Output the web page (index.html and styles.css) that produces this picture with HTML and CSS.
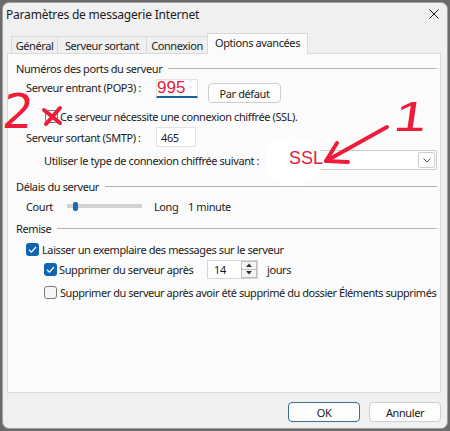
FILE: index.html
```html
<!DOCTYPE html>
<html lang="fr">
<head>
<meta charset="utf-8">
<title>Paramètres de messagerie Internet</title>
<link rel="stylesheet" href="styles.css">
</head>
<body>
<div class="window">
  <div class="titlebar">
    <span class="title">Paramètres de messagerie Internet</span>
    <svg class="close" width="10" height="10" viewBox="0 0 10 10"><path d="M0.5 0.5 L9.5 9.5 M9.5 0.5 L0.5 9.5" stroke="#1b1b1b" stroke-width="1" fill="none"/></svg>
  </div>
  <div class="tabs">
    <div class="tab t1">Général</div>
    <div class="tab t2">Serveur sortant</div>
    <div class="tab t3">Connexion</div>
    <div class="tab t4 active">Options avancées</div>
  </div>
  <div class="panel">
    <div class="head h-ports"><span>Numéros des ports du serveur</span><i class="rule"></i></div>
    <div class="row pop3">
      <span class="lbl">Serveur entrant (POP3) :</span>
      <div class="field f995">995</div>
      <div class="btn pd">Par défaut</div>
    </div>
    <div class="row ssl"><span class="cb"></span><span class="cbtext">Ce serveur nécessite une connexion chiffrée (SSL).</span></div>
    <div class="row smtp">
      <span class="lbl">Serveur sortant (SMTP) :</span>
      <div class="field f465">465</div>
    </div>
    <div class="row type">
      <span class="lbl2">Utiliser le type de connexion chiffrée suivant :</span>
      <div class="select">
        <span class="dd"><svg width="8" height="5" viewBox="0 0 8 5"><path d="M0.5 0.5 L4 4 L7.5 0.5" stroke="#555" stroke-width="1" fill="none"/></svg></span>
      </div>
    </div>
    <div class="head h-delay"><span>Délais du serveur</span><i class="rule"></i></div>
    <div class="row slider-row">
      <span class="court">Court</span>
      <div class="slider"><span class="thumb"></span></div>
      <span class="long">Long</span>
      <span>1 minute</span>
    </div>
    <div class="head h-remise"><span>Remise</span><i class="rule"></i></div>
    <div class="row cb1">
      <span class="cb checked"><svg width="13" height="13" viewBox="0 0 13 13"><path d="M3 6.8 L5.4 9.1 L10 4" stroke="#fff" stroke-width="1.3" fill="none"/></svg></span>
      <span class="cbtext">Laisser un exemplaire des messages sur le serveur</span>
    </div>
    <div class="row cb2">
      <span class="cb checked"><svg width="13" height="13" viewBox="0 0 13 13"><path d="M3 6.8 L5.4 9.1 L10 4" stroke="#fff" stroke-width="1.3" fill="none"/></svg></span>
      <span class="cbtext w-after">Supprimer du serveur après</span>
      <div class="spin">
        <span class="spin-val">14</span>
        <span class="spin-btns">
          <span class="sb up"><svg width="6" height="4" viewBox="0 0 6 4"><path d="M0 4 L3 0.5 L6 4 Z" fill="#333"/></svg></span>
          <span class="sb down"><svg width="6" height="4" viewBox="0 0 6 4"><path d="M0 0 L3 3.5 L6 0 Z" fill="#333"/></svg></span>
        </span>
      </div>
      <span class="jours">jours</span>
    </div>
    <div class="row cb3">
      <span class="cb"></span>
      <span class="cbtext long-text">Supprimer du serveur après avoir été supprimé du dossier Éléments supprimés</span>
    </div>
  </div>
  <div class="footer">
    <div class="btn ok">OK</div>
    <div class="btn">Annuler</div>
  </div>
</div>

<svg class="blob" width="64" height="52" viewBox="0 0 64 52"><path d="M10 8 C18 1 34 0 44 4 C56 8 62 18 60 30 C58 42 46 50 32 50 C18 51 6 46 4 34 C2 24 3 14 10 8 Z" fill="#ffffff"/></svg>
<span class="anno-ssl">SSL</span>
<span class="anno-two">2</span>
<span class="anno-one">1</span>
<svg class="anno-marks" width="450" height="200" viewBox="0 0 450 200">
  <g stroke="#ec1c3a" stroke-width="4" stroke-linecap="round" stroke-linejoin="round" fill="none">
    <path d="M44 110 L60 123 M60 108 L46 124"/>
    <path d="M387 127 L326 161"/>
    <path d="M337 143 L326 161 L348 162"/>
  </g>
</svg>
</body>
</html>
```
FILE: styles.css
```css
* { box-sizing: border-box; }
html, body { margin: 0; }
body {
  position: relative;
  width: 450px;
  height: 431px;
  padding: 2px 0 0 2px;
  background: #6b6b6b;
  font-family: "Noto Sans", sans-serif;
  font-size: 11px;
  letter-spacing: -0.4px;
  color: #1b1b1b;
  overflow: hidden;
}
.window {
  width: 446px;
  height: 427px;
  background: #f0f0f0;
  border: 1px solid #a0a0a0;
  border-radius: 7px;
  display: flex;
  flex-direction: column;
}
.titlebar {
  height: 22px;
  padding: 0 8px 0 3px;
  display: flex;
  align-items: center;
  justify-content: space-between;
  font-size: 12px;
  letter-spacing: -0.2px;
}
.tabs {
  margin-top: 8px;
  height: 20px;
  padding-left: 8px;
  display: flex;
  align-items: flex-end;
}
.tab {
  height: 17px;
  margin-right: -1px;
  border: 1px solid #d9d9d9;
  border-bottom: none;
  background: #f0f0f0;
  display: flex;
  align-items: center;
  justify-content: center;
}
.t1 { width: 47px; }
.t2 { width: 90px; }
.t3 { width: 62px; }
.t4 { width: 101px; }
.tab.active {
  height: 21px;
  margin-bottom: -1px;
  background: #fbfbfb;
  position: relative;
  z-index: 1;
  padding-bottom: 3px;
}
.panel {
  margin-left: 4px;
  width: 434px;
  height: 340px;
  border: 1px solid #d9d9d9;
  background: #fbfbfb;
  padding: 6px 3px 0 8px;
  display: flex;
  flex-direction: column;
}
.head {
  height: 16px;
  display: flex;
  align-items: center;
}
.rule {
  flex: 1;
  height: 1px;
  background: #b4b4b4;
  margin-left: 6px;
}
.row { display: flex; align-items: center; }
.pop3 { margin-top: 2px; height: 28px; align-items: flex-start; padding-left: 10px; }
.pop3 .lbl { line-height: 20px; }
.lbl { width: 130px; }
.field {
  background: #ffffff;
  border: 1px solid #e3e3e3;
}
.f995 {
  margin-top: 1px;
  width: 42px;
  height: 19px;
  border-bottom: 2px solid #1d6296;
  color: #e8193a;
  font-family: "Liberation Sans", sans-serif;
  font-size: 17px;
  letter-spacing: 0;
  line-height: 16px;
  padding-left: 0;
}
.btn {
  width: 72px;
  height: 20px;
  border: 1px solid #cfcfcf;
  border-radius: 4px;
  background: #fdfdfd;
  display: flex;
  align-items: center;
  justify-content: center;
}
.pd { margin-top: 5px; margin-left: 10px; width: 73px; }
.ssl { margin-top: 1px; height: 18px; padding-left: 29px; }
.cb {
  width: 13px;
  height: 13px;
  border: 1px solid #7a7a7a;
  border-radius: 3px;
  background: #f7f7f7;
  flex: none;
}
.cb.checked {
  border: none;
  background: #0f64b4;
  display: flex;
}
.cbtext { margin-left: 2px; white-space: nowrap; }
.long-text { letter-spacing: -0.45px; }
.smtp { margin-top: 1px; height: 22px; padding-left: 10px; }
.f465 {
  width: 40px;
  height: 20px;
  padding-left: 4px;
  display: flex;
  align-items: center;
}
.type { margin-top: 2px; height: 22px; padding-left: 28px; align-items: flex-start; }
.type .lbl2 { width: 224px; line-height: 22px; }
.select {
  width: 169px;
  height: 20px;
  background: #ffffff;
  border: 1px solid #c9c9c9;
  border-radius: 2px;
  display: flex;
  justify-content: flex-end;
  align-items: center;
  padding-right: 1px;
}
.dd {
  width: 17px;
  height: 16px;
  border: 1px solid #cfcfcf;
  border-radius: 2px;
  display: flex;
  align-items: center;
  justify-content: center;
}
.h-delay { margin-top: 6px; }
.slider-row { margin-top: 2px; height: 20px; padding-left: 10px; }
.court { width: 41px; }
.slider {
  width: 75px;
  height: 9px;
  background: linear-gradient(#d2d2d2, #d2d2d2) center / 100% 4px no-repeat;
  border-radius: 2px;
  display: flex;
  align-items: center;
}
.thumb {
  margin-left: 6px;
  width: 5px;
  height: 9px;
  border-radius: 2px;
  background: #1f67b5;
}
.long { margin-left: 12px; width: 34px; }
.h-remise { margin-top: 4px; }
.cb1 { margin-top: 4px; height: 18px; padding-left: 10px; }
.cb1 .cbtext { margin-left: 3px; }
.cb2 { margin-top: 1px; height: 20px; padding-left: 28px; }
.w-after { width: 148px; }
.spin {
  width: 51px;
  height: 19px;
  background: #ffffff;
  border: 1px solid #d6d6d6;
  display: flex;
  align-items: center;
  justify-content: space-between;
  padding-left: 6px;
}
.spin-btns {
  width: 16px;
  height: 17px;
  display: flex;
  flex-direction: column;
}
.sb {
  flex: 1;
  border: 1px solid #bdbdbd;
  background: #f4f4f4;
  display: flex;
  align-items: center;
  justify-content: center;
}
.sb.down { border-top: none; }
.jours { margin-left: 9px; }
.cb3 { margin-top: 4px; height: 18px; padding-left: 28px; }
.cb3 .cbtext { margin-left: 3px; }
.footer {
  margin-top: 9px;
  padding-right: 6px;
  display: flex;
  justify-content: flex-end;
  gap: 9px;
}
.btn.ok { border-color: #3a6f9a; }

/* annotations drawn over the screenshot */
.blob { position: absolute; left: 262px; top: 135px; }
.anno-ssl {
  position: absolute;
  left: 289px;
  top: 149px;
  color: #e8193a;
  font-family: "Liberation Sans", sans-serif;
  font-size: 18px;
  letter-spacing: 0;
  line-height: 18px;
}
.anno-two {
  position: absolute;
  left: 3px;
  top: 87px;
  color: #ec1c3a;
  font-family: "DejaVu Sans", sans-serif;
  font-size: 48px;
  letter-spacing: 0;
  line-height: 48px;
  transform: skewX(-6deg);
}
.anno-one {
  position: absolute;
  left: 399px;
  top: 96px;
  color: #ec1c3a;
  font-family: "Liberation Sans", sans-serif;
  font-size: 42px;
  letter-spacing: 0;
  line-height: 42px;
  transform: scaleX(1.4) skewX(-6deg);
}
.anno-marks { position: absolute; left: 0; top: 0; }
```
